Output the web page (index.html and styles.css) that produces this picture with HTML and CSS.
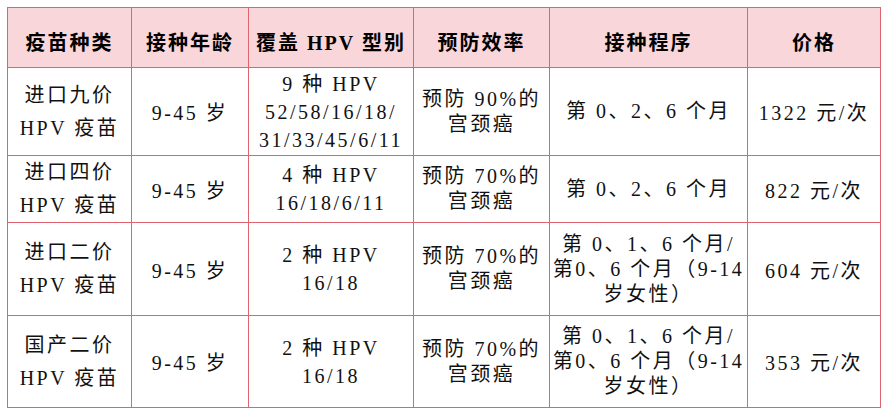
FILE: index.html
```html
<!DOCTYPE html>
<html lang="zh-CN">
<head>
<meta charset="utf-8">
<title>HPV 疫苗</title>
<link rel="stylesheet" href="styles.css">
</head>
<body>
<table class="vax">
  <colgroup>
    <col class="c1"><col class="c2"><col class="c3"><col class="c4"><col class="c5"><col class="c6">
  </colgroup>
  <thead>
    <tr class="head">
      <th>疫苗种类</th>
      <th>接种年龄</th>
      <th>覆盖 HPV 型别</th>
      <th>预防效率</th>
      <th>接种程序</th>
      <th>价格</th>
    </tr>
  </thead>
  <tbody>
    <tr class="r1">
      <td class="name">进口九价<br>HPV 疫苗</td>
      <td>9-45 岁</td>
      <td class="types">9 种 HPV<br>52/58/16/18/<br>31/33/45/6/11</td>
      <td class="eff">预防 90%的<br>宫颈癌</td>
      <td class="sched">第 0、2、6 个月</td>
      <td>1322 元/次</td>
    </tr>
    <tr class="r2">
      <td class="name">进口四价<br>HPV 疫苗</td>
      <td>9-45 岁</td>
      <td class="types">4 种 HPV<br>16/18/6/11</td>
      <td class="eff">预防 70%的<br>宫颈癌</td>
      <td class="sched">第 0、2、6 个月</td>
      <td>822 元/次</td>
    </tr>
    <tr class="r3">
      <td class="name">进口二价<br>HPV 疫苗</td>
      <td>9-45 岁</td>
      <td class="types">2 种 HPV<br>16/18</td>
      <td class="eff">预防 70%的<br>宫颈癌</td>
      <td class="sched tight">第 0、1、6 个月/<br>第0、6 个月（9-14<br>岁女性）</td>
      <td>604 元/次</td>
    </tr>
    <tr class="r4">
      <td class="name">国产二价<br>HPV 疫苗</td>
      <td>9-45 岁</td>
      <td class="types">2 种 HPV<br>16/18</td>
      <td class="eff">预防 70%的<br>宫颈癌</td>
      <td class="sched tight">第 0、1、6 个月/<br>第0、6 个月（9-14<br>岁女性）</td>
      <td>353 元/次</td>
    </tr>
  </tbody>
</table>
</body>
</html>
```

FILE: styles.css
```css
body {
  margin: 7px;
  background: #ffffff;
  font-family: "Liberation Serif", "Noto Sans CJK SC", serif;
  color: #111111;
}

.vax {
  border-collapse: collapse;
  table-layout: fixed;
  width: 873px;
}

.c1 { width: 124px; }
.c2 { width: 117px; }
.c3 { width: 165px; }
.c4 { width: 136px; }
.c5 { width: 198px; }
.c6 { width: 133px; }

.vax th,
.vax td {
  border: 1px solid #e0646f;
  text-align: center;
  vertical-align: middle;
  padding: 0;
  font-size: 20px;
  letter-spacing: 2.5px;
  white-space: nowrap;
}

.vax th {
  background: #f9d6d9;
  font-weight: bold;
  letter-spacing: 2px;
  padding-top: 8px;
  color: #000;
}

.head { height: 60px; }
.r1 { height: 88px; }
.r2 { height: 65px; }
.r3 { height: 93px; }
.r4 { height: 92px; }

.name { line-height: 33px; }
.types { line-height: 28px; }
.eff { line-height: 25px; }
.sched { line-height: 25px; }
.tight { letter-spacing: 1.5px; }
```
